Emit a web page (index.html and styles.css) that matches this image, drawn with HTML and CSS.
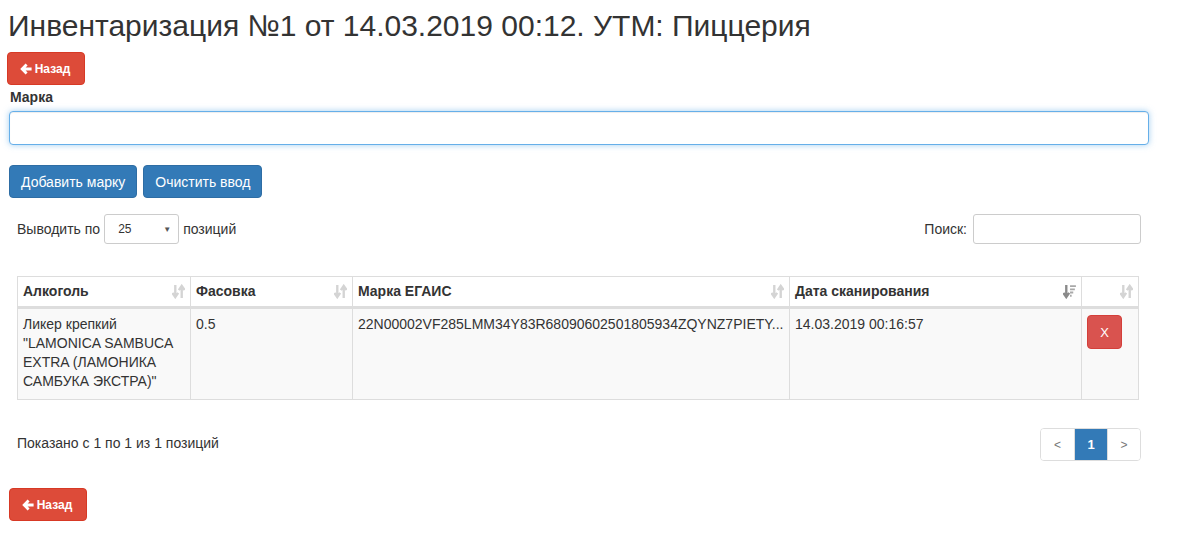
FILE: index.html
```html
<!DOCTYPE html>
<html lang="ru">
<head>
<meta charset="utf-8">
<title>Инвентаризация</title>
<link rel="stylesheet" href="styles.css">
</head>
<body>
<div class="page">
  <h1 class="title">Инвентаризация №1 от 14.03.2019 00:12. УТМ: Пиццерия</h1>
  <a class="btn btn-back"><svg class="arrow" viewBox="0 0 12 12" width="12" height="12"><path d="M5.6 0.6 L7.6 2.6 L5.6 4.6 H11.6 V7.4 H5.6 L7.6 9.4 L5.6 11.4 L0.2 6 Z" fill="#fff"/></svg>Назад</a>
  <label class="field-label">Марка</label>
  <input class="mark-input" type="text">
  <div class="actions">
    <button class="btn btn-primary">Добавить марку</button>
    <button class="btn btn-primary">Очистить ввод</button>
  </div>
  <div class="dt-wrapper">
    <div class="dt-top">
      <div class="dt-length">Выводить по <span class="select"><span>25</span><span class="caret">▼</span></span> позиций</div>
      <div class="dt-filter">Поиск: <span class="search-box"></span></div>
    </div>
    <table class="grid">
      <colgroup>
        <col class="c1"><col class="c2"><col class="c3"><col class="c4"><col class="c5">
      </colgroup>
      <thead>
        <tr>
          <th><div class="th-in"><span>Алкоголь</span><svg class="sort" viewBox="0 0 12 14" width="13" height="15"><path d="M3 1V11M0.3 8.3L3 12.2L5.7 8.3M9 13V3M6.3 5.7L9 1.8L11.7 5.7" stroke="#d4d4d4" stroke-width="2.2" fill="none"/></svg></div></th>
          <th><div class="th-in"><span>Фасовка</span><svg class="sort" viewBox="0 0 12 14" width="13" height="15"><path d="M3 1V11M0.3 8.3L3 12.2L5.7 8.3M9 13V3M6.3 5.7L9 1.8L11.7 5.7" stroke="#d4d4d4" stroke-width="2.2" fill="none"/></svg></div></th>
          <th><div class="th-in"><span>Марка ЕГАИС</span><svg class="sort" viewBox="0 0 12 14" width="13" height="15"><path d="M3 1V11M0.3 8.3L3 12.2L5.7 8.3M9 13V3M6.3 5.7L9 1.8L11.7 5.7" stroke="#d4d4d4" stroke-width="2.2" fill="none"/></svg></div></th>
          <th><div class="th-in"><span>Дата сканирования</span><svg class="sort" viewBox="0 0 12 14" width="13" height="15"><path d="M3 1V11M0.3 8.3L3 12.2L5.7 8.3" stroke="#8a8a8a" stroke-width="2.2" fill="none"/><path d="M6.5 2H12M6.5 5H11M6.5 8H9.5M6.5 11H8" stroke="#a8a8a8" stroke-width="1.8"/></svg></div></th>
          <th><div class="th-in"><span></span><svg class="sort" viewBox="0 0 12 14" width="13" height="15"><path d="M3 1V11M0.3 8.3L3 12.2L5.7 8.3M9 13V3M6.3 5.7L9 1.8L11.7 5.7" stroke="#d4d4d4" stroke-width="2.2" fill="none"/></svg></div></th>
        </tr>
      </thead>
      <tbody>
        <tr>
          <td>Ликер крепкий "LAMONICA SAMBUCA EXTRA (ЛАМОНИКА САМБУКА ЭКСТРА)"</td>
          <td>0.5</td>
          <td>22N00002VF285LMM34Y83R68090602501805934ZQYNZ7PIETY...</td>
          <td>14.03.2019 00:16:57</td>
          <td><button class="btn btn-danger btn-x">X</button></td>
        </tr>
      </tbody>
    </table>
    <div class="dt-bottom">
      <div class="dt-info">Показано с 1 по 1 из 1 позиций</div>
      <ul class="pager">
        <li class="pg">&lt;</li>
        <li class="pg active">1</li>
        <li class="pg">&gt;</li>
      </ul>
    </div>
  </div>
  <a class="btn btn-back btn-back-bottom"><svg class="arrow" viewBox="0 0 12 12" width="12" height="12"><path d="M5.6 0.6 L7.6 2.6 L5.6 4.6 H11.6 V7.4 H5.6 L7.6 9.4 L5.6 11.4 L0.2 6 Z" fill="#fff"/></svg>Назад</a>
</div>
</body>
</html>
```

FILE: styles.css
```css
* { box-sizing: border-box; }
body {
  margin: 0;
  font-family: "Liberation Sans", Arial, sans-serif;
  font-size: 14px;
  color: #333;
  background: #fff;
}
.page {
  padding: 0 31px 20px 8px;
  display: flex;
  flex-direction: column;
  align-items: flex-start;
}
.title {
  font-size: 30px;
  font-weight: normal;
  line-height: 33px;
  margin: 9px 0 10px 0;
  color: #333;
}
.btn {
  display: inline-flex;
  align-items: center;
  justify-content: center;
  border: 1px solid transparent;
  border-radius: 4px;
  font-family: "Liberation Sans", Arial, sans-serif;
  cursor: pointer;
}
.btn-back {
  height: 33px;
  width: 78px;
  margin-left: -1px;
  background: #dd4b39;
  border-color: #d73925;
  color: #fff;
  font-size: 12px;
  font-weight: bold;
  gap: 3px;
}
.btn-back .arrow { margin-left: -2px; }
.btn-back-bottom { margin-left: 1px; margin-top: 27px; }
.field-label {
  display: block;
  font-weight: bold;
  font-size: 14px;
  line-height: 18px;
  margin: 3px 0 5px 2px;
}
.mark-input {
  display: block;
  width: 1140px;
  height: 34px;
  margin-left: 1px;
  border: 1px solid #66afe9;
  border-radius: 4px;
  box-shadow: inset 0 1px 1px rgba(0,0,0,.075), 0 0 6px rgba(102,175,233,.6);
  outline: none;
}
.actions {
  display: flex;
  gap: 6px;
  margin: 20px 0 0 1px;
}
.btn-primary {
  height: 33px;
  padding: 0 11px;
  background: #337ab7;
  border-color: #2e6da4;
  color: #fff;
  font-size: 14px;
}
.dt-wrapper {
  width: 1124px;
  margin: 16px 0 0 9px;
}
.dt-top {
  display: flex;
  justify-content: space-between;
  align-items: center;
  height: 30px;
}
.dt-length, .dt-filter {
  display: flex;
  align-items: center;
  gap: 4px;
}
.select {
  display: inline-flex;
  align-items: center;
  justify-content: space-between;
  width: 75px;
  height: 30px;
  border: 1px solid #ccc;
  border-radius: 3px;
  padding: 0 7px 0 13px;
  font-size: 12px;
}
.caret { font-size: 8px; color: #555; }
.search-box {
  display: inline-block;
  width: 168px;
  height: 30px;
  margin-left: 2px;
  border: 1px solid #ccc;
  border-radius: 3px;
}
.grid {
  width: 1121px;
  margin-top: 32px;
  border-collapse: collapse;
  table-layout: fixed;
  border: 1px solid #ddd;
}
.c1 { width: 173px; }
.c2 { width: 162px; }
.c3 { width: 437px; }
.c4 { width: 292px; }
.c5 { width: 57px; }
.grid th {
  text-align: left;
  font-weight: bold;
  padding: 5px;
  line-height: 19px;
  border: 1px solid #ddd;
  border-bottom: 3px solid #ddd;
  background: #fff;
}
.th-in {
  display: flex;
  justify-content: space-between;
  align-items: center;
}
.th-in .sort { margin-right: 0; }
.grid td {
  vertical-align: top;
  padding: 6px 5px 8px 5px;
  line-height: 19px;
  border: 1px solid #ddd;
  background: #f9f9f9;
}
.grid td:nth-child(3) { white-space: nowrap; overflow: hidden; }
.btn-x {
  width: 35px;
  height: 34px;
  margin-top: 0;
  background: #d9534f;
  border-color: #d43f3a;
  color: #fff;
  font-size: 13px;
}
.dt-bottom {
  display: flex;
  justify-content: space-between;
  align-items: flex-start;
  margin-top: 28px;
}
.dt-info {
  padding-top: 5px;
  line-height: 20px;
}
.pager {
  display: flex;
  list-style: none;
  margin: 0;
  padding: 0;
  border: 1px solid #ddd;
  border-radius: 4px;
  overflow: hidden;
}
.pg {
  width: 33px;
  height: 31px;
  display: flex;
  align-items: center;
  justify-content: center;
  color: #777;
  font-size: 12px;
  background: #fff;
}
.pg + .pg { border-left: 1px solid #ddd; }
.pg.active {
  background: #337ab7;
  color: #fff;
  font-weight: bold;
  font-size: 13px;
}
```
